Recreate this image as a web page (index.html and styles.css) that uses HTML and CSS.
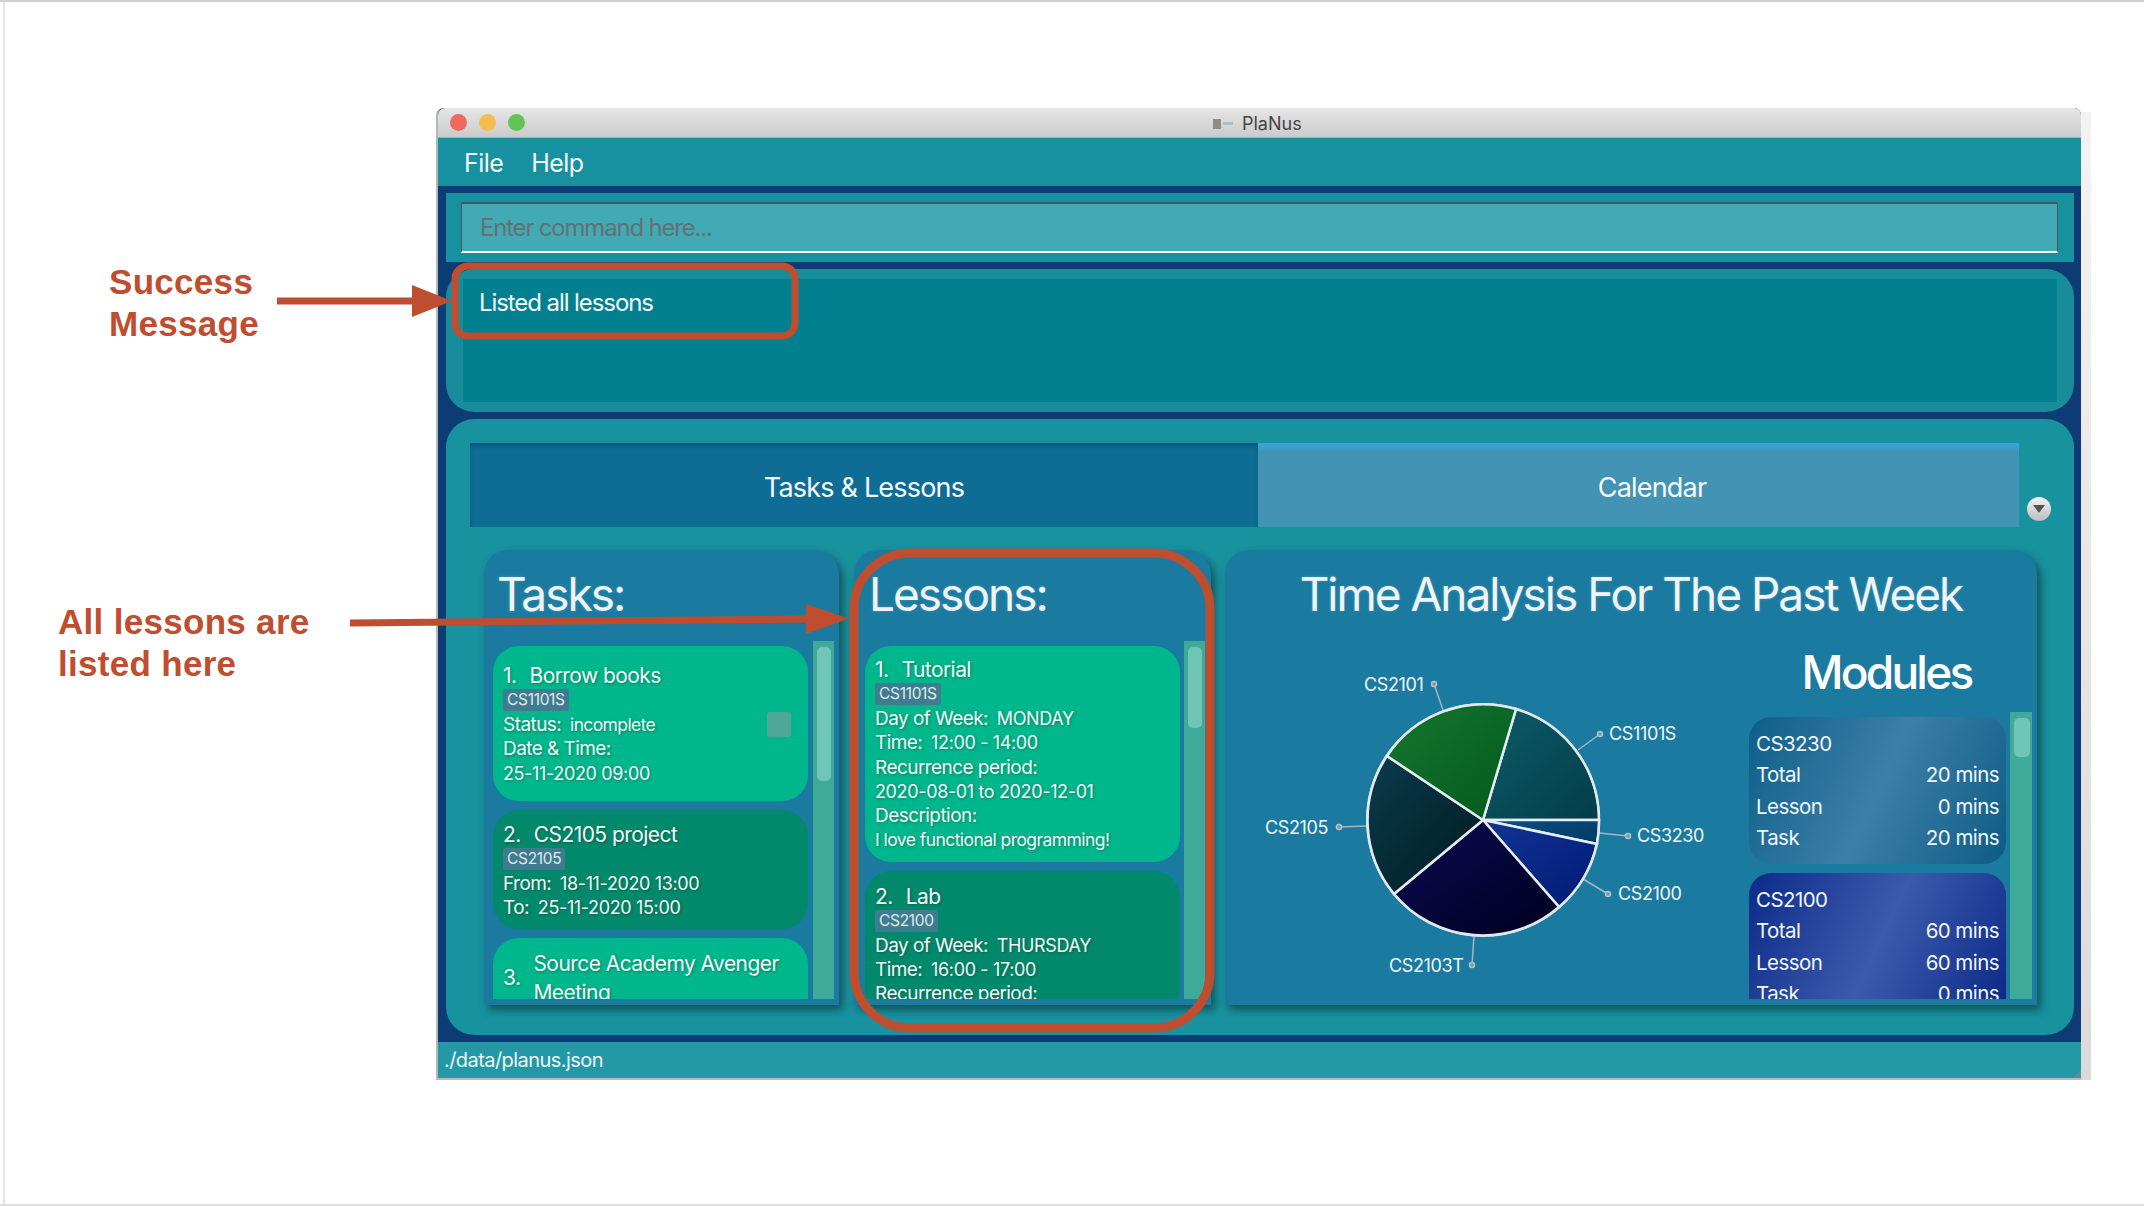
FILE: index.html
```html
<!DOCTYPE html>
<html>
<head>
    <title>PlaNus</title>
    <link rel="stylesheet" href="styles.css">
</head>
<body>
    <div class="slide">
        <div class="window">
            <div class="titlebar">
                <span class="light red"></span>
                <span class="light yellow"></span>
                <span class="light green"></span>
                <div class="wintitle"><span class="proxy"></span><span class="proxy-dash"></span>PlaNus</div>
            </div>
            <div class="menubar"><span>File</span><span>Help</span></div>

            <div class="content">
                <div class="command">
                    <div class="input">Enter command here...</div>
                </div>

                <div class="result">
                    <div class="result-inner">Listed all lessons</div>
                </div>

                <div class="main">
                    <div class="tabhead">
                        <div class="tabs">
                            <div class="tab active">Tasks &amp; Lessons</div>
                            <div class="tab">Calendar</div>
                        </div>
                        <div class="tabmenu"><span></span></div>
                    </div>

                    <div class="panels">
                        <!-- Tasks -->
                        <div class="panel tasks">
                            <h2>Tasks:</h2>
                            <div class="list">
                                <div class="cards">
                                    <div class="card light-card tall">
                                        <div class="card-body">
                                            <div class="card-title"><span>1.</span><span>Borrow books</span></div>
                                            <span class="badge">CS1101S</span>
                                            <p>Status: <small class="word">incomplete</small></p>
                                            <p>Date &amp; Time:</p>
                                            <p class="val">25-11-2020 09:00</p>
                                        </div>
                                        <span class="check"></span>
                                    </div>
                                    <div class="card dark-card">
                                        <div class="card-body">
                                            <div class="card-title"><span>2.</span><span>CS2105 project</span></div>
                                            <span class="badge">CS2105</span>
                                            <p>From: <small>18-11-2020 13:00</small></p>
                                            <p>To: <small>25-11-2020 15:00</small></p>
                                        </div>
                                    </div>
                                    <div class="card light-card">
                                        <div class="card-body">
                                            <div class="card-title wrap"><span>3.</span><span>Source Academy Avenger Meeting</span></div>
                                            <span class="badge">CS2101</span>
                                        </div>
                                    </div>
                                </div>
                                <div class="track"><div class="thumb thumb-tasks"></div></div>
                            </div>
                        </div>

                        <!-- Lessons -->
                        <div class="panel lessons">
                            <h2>Lessons:</h2>
                            <div class="list">
                                <div class="cards">
                                    <div class="card light-card">
                                        <div class="card-body">
                                            <div class="card-title"><span>1.</span><span>Tutorial</span></div>
                                            <span class="badge">CS1101S</span>
                                            <p>Day of Week: <small>MONDAY</small></p>
                                            <p>Time: <small>12:00 - 14:00</small></p>
                                            <p>Recurrence period:</p>
                                            <p class="val">2020-08-01 to 2020-12-01</p>
                                            <p>Description:</p>
                                            <p class="desc">I love functional programming!</p>
                                        </div>
                                    </div>
                                    <div class="card dark-card">
                                        <div class="card-body">
                                            <div class="card-title"><span>2.</span><span>Lab</span></div>
                                            <span class="badge">CS2100</span>
                                            <p>Day of Week: <small>THURSDAY</small></p>
                                            <p>Time: <small>16:00 - 17:00</small></p>
                                            <p>Recurrence period:</p>
                                        </div>
                                    </div>
                                </div>
                                <div class="track"><div class="thumb thumb-lessons"></div></div>
                            </div>
                        </div>

                        <!-- Time analysis -->
                        <div class="panel analysis">
                            <h2>Time Analysis For The Past Week</h2>
                            <div class="analysis-body">
                                <svg class="pie" width="519" height="358" viewBox="1225 641 519 358">
                                    <defs>
                                        <linearGradient id="g1" x1="0" y1="0" x2="1" y2="1"><stop offset="0" stop-color="#0d5c68"/><stop offset="1" stop-color="#033c49"/></linearGradient>
                                        <linearGradient id="g2" x1="0" y1="0" x2="1" y2="1"><stop offset="0" stop-color="#0a5083"/><stop offset="1" stop-color="#003864"/></linearGradient>
                                        <linearGradient id="g3" x1="0" y1="0" x2="1" y2="1"><stop offset="0" stop-color="#133394"/><stop offset="1" stop-color="#001b76"/></linearGradient>
                                        <linearGradient id="g4" x1="0" y1="0" x2="1" y2="1"><stop offset="0" stop-color="#0b0a55"/><stop offset="1" stop-color="#00001e"/></linearGradient>
                                        <linearGradient id="g5" x1="0" y1="0" x2="1" y2="1"><stop offset="0" stop-color="#0b3b4c"/><stop offset="1" stop-color="#001a20"/></linearGradient>
                                        <linearGradient id="g6" x1="0" y1="0" x2="1" y2="1"><stop offset="0" stop-color="#17752f"/><stop offset="1" stop-color="#005a1e"/></linearGradient>
                                    </defs>
                                    <g class="leaders">
                                        <path d="M1443 710L1434 684"/><circle cx="1434" cy="684" r="2.5"/>
                                        <path d="M1578 750L1600 734"/><circle cx="1600" cy="734" r="2.5"/>
                                        <path d="M1599 833L1628 836"/><circle cx="1628" cy="836" r="2.5"/>
                                        <path d="M1583 879L1608 894"/><circle cx="1608" cy="894" r="2.5"/>
                                        <path d="M1474 936L1472 965"/><circle cx="1472" cy="965" r="2.5"/>
                                        <path d="M1367 826L1339 827"/><circle cx="1339" cy="827" r="2.5"/>
                                    </g>
                                    <g class="slices">
                                        <path fill="url(#g1)" d="M1483 820L1516 709A116 116 0 0 1 1599 820Z"/>
                                        <path fill="url(#g2)" d="M1483 820L1599 820A116 116 0 0 1 1597 844Z"/>
                                        <path fill="url(#g3)" d="M1483 820L1597 844A116 116 0 0 1 1559 907Z"/>
                                        <path fill="url(#g4)" d="M1483 820L1559 907A116 116 0 0 1 1394 894Z"/>
                                        <path fill="url(#g5)" d="M1483 820L1394 894A116 116 0 0 1 1387 756Z"/>
                                        <path fill="url(#g6)" d="M1483 820L1387 756A116 116 0 0 1 1516 709Z"/>
                                    </g>
                                    <circle class="rim" cx="1483" cy="820" r="116"/>
                                    <g class="pie-labels">
                                        <text x="1364" y="691">CS2101</text>
                                        <text x="1609" y="740">CS1101S</text>
                                        <text x="1637" y="842">CS3230</text>
                                        <text x="1618" y="900">CS2100</text>
                                        <text x="1389" y="972">CS2103T</text>
                                        <text x="1265" y="834">CS2105</text>
                                    </g>
                                </svg>
                                <div class="modules">
                                    <h3>Modules</h3>
                                    <div class="list">
                                        <div class="cards">
                                            <div class="mod mod-a">
                                                <p>CS3230</p>
                                                <p><span>Total</span><span>20 mins</span></p>
                                                <p><span>Lesson</span><span>0 mins</span></p>
                                                <p><span>Task</span><span>20 mins</span></p>
                                            </div>
                                            <div class="mod mod-b">
                                                <p>CS2100</p>
                                                <p><span>Total</span><span>60 mins</span></p>
                                                <p><span>Lesson</span><span>60 mins</span></p>
                                                <p><span>Task</span><span>0 mins</span></p>
                                            </div>
                                        </div>
                                        <div class="track"><div class="thumb thumb-modules"></div></div>
                                    </div>
                                </div>
                            </div>
                        </div>
                    </div>
                </div>
            </div>

            <div class="statusbar">./data/planus.json</div>
        </div>

        <!-- Annotations on top of the screenshot -->
        <div class="note note-success">Success<br>Message</div>
        <div class="note note-lessons">All lessons are<br>listed here</div>
        <svg class="marks" width="2144" height="1206" viewBox="0 0 2144 1206">
            <rect x="455" y="266" width="340" height="70" rx="13"/>
            <rect class="big" x="854" y="553" width="356" height="475" rx="56"/>
            <path d="M277 301H415"/>
            <polygon points="412,285 452,301 412,317"/>
            <path d="M350 623L808 619"/>
            <polygon points="806,604 849,618.5 806,634"/>
        </svg>
    </div>
</body>
</html>
```

FILE: styles.css
```css
* {
    box-sizing: border-box;
}
html, body {
    margin: 0;
    padding: 0;
    background: white;
}
body {
    font-family: Inter, "Liberation Sans", sans-serif;
    letter-spacing: -0.035em;
}
.slide {
    position: relative;
    width: 2144px;
    height: 1206px;
    overflow: hidden;
    padding: 106px 0 0 436px;
    border-top: 2px solid #d0d0d0;
    border-bottom: 2px solid #dcdcdc;
}
.slide::before {
    content: "";
    position: absolute;
    left: 3px;
    top: 0;
    bottom: 0;
    width: 2px;
    background: #e4e6e8;
}

/* window */
.window {
    position: relative;
    display: flex;
    flex-direction: column;
    width: 1645px;
    height: 972px;
    background: #0d3b73;
    border-left: 2px solid #b4b8bc;
    border-radius: 7px 7px 0 0;
}
.window::after {
    content: "";
    position: absolute;
    left: 100%;
    top: 4px;
    bottom: 0;
    width: 10px;
    background: linear-gradient(#f3f3f3, #dadada);
}
.titlebar {
    position: relative;
    display: flex;
    align-items: center;
    flex: none;
    height: 30px;
    padding-left: 12px;
    gap: 12px;
    background: linear-gradient(#e6e6e6, #cbcbcb);
    border-bottom: 1px solid #aaa;
    border-radius: 7px 7px 0 0;
}
.light {
    width: 17px;
    height: 17px;
    border-radius: 50%;
}
.red { background: #ee6a5f; }
.yellow { background: #f5bd4f; }
.green { background: #61c454; }
.wintitle {
    position: absolute;
    left: 775px;
    top: 5px;
    display: flex;
    align-items: center;
    font-size: 18px;
    color: #444;
    letter-spacing: 0;
}
.proxy {
    width: 8px;
    height: 10px;
    background: #8d8d85;
}
.proxy-dash {
    width: 10px;
    height: 3px;
    margin: 0 9px 0 2px;
    background: #aebccb;
}
.menubar {
    display: flex;
    flex: none;
    gap: 28px;
    height: 48px;
    padding-left: 26px;
    font-size: 25px;
    line-height: 50px;
    color: #f2f8f9;
    background: #17909f;
}
.content {
    flex: 1;
    display: flex;
    flex-direction: column;
    gap: 7px;
    padding: 7px 7px 7px 8px;
}
.command {
    height: 69px;
    padding: 9px 16px 9px 15px;
    background: #17909f;
}
.input {
    height: 51px;
    padding-left: 18px;
    font-size: 24px;
    line-height: 48px;
    letter-spacing: -0.05em;
    color: #647173;
    background: #41aab5;
    border: solid #4a5558;
    border-width: 2px 1px 0 1px;
    border-bottom: 2px solid white;
}
.result {
    height: 143px;
    padding: 10px 17px;
    background: #188c9a;
    border-radius: 28px;
}
.result-inner {
    height: 123px;
    padding: 5px 16px;
    font-size: 24px;
    line-height: 38px;
    letter-spacing: -0.045em;
    color: #f4fafb;
    background: #03808f;
}
.main {
    flex: 1;
    padding: 24px 0 0;
    background: #18929f;
    border-radius: 28px;
}

/* tabs */
.tabhead {
    display: flex;
    gap: 8px;
    margin-left: 24px;
}
.tabs {
    display: flex;
    width: 1549px;
    height: 84px;
    overflow: hidden;
}
.tab {
    flex: 0 0 788px;
    font-size: 27px;
    line-height: 90px;
    letter-spacing: -0.03em;
    text-align: center;
    color: #f6fafc;
    background: linear-gradient(#33a9dd, #4393b5 9px);
}
.tab.active {
    background: #0f6d95;
    box-shadow: inset 0 3px 4px rgba(0,0,0,0.2);
}
.tabmenu {
    align-self: flex-end;
    display: flex;
    align-items: center;
    justify-content: center;
    width: 24px;
    height: 24px;
    margin-bottom: 6px;
    border-radius: 50%;
    background: linear-gradient(#f4f4f4, #bcbcbc);
}
.tabmenu span {
    border: 6px solid transparent;
    border-top: 8px solid #555;
    border-bottom: 0;
}

/* panels */
.panels {
    display: flex;
    gap: 15px;
    margin: 23px 0 0 38px;
}
.panel {
    display: flex;
    flex-direction: column;
    height: 455px;
    padding-bottom: 6px;
    background: #1b7aa0;
    border-radius: 24px 24px 0 0;
    box-shadow: 4px 5px 8px rgba(0,0,0,0.42);
}
.panel h2 {
    flex: 0 0 91px;
    margin: 0;
    font-size: 46px;
    font-weight: 400;
    line-height: 89px;
    letter-spacing: -0.0435em;
    color: #eef4f8;
    text-shadow: 0 0 3px rgba(255,255,255,0.2);
}
.tasks {
    width: 355px;
    padding-left: 9px;
    padding-right: 5px;
}
.tasks h2 { padding-left: 4px; }
.lessons {
    width: 357px;
    padding-left: 11px;
    padding-right: 6px;
}
.lessons h2 { padding-left: 4px; }
.analysis {
    width: 812px;
    margin-left: -1px;
    padding-right: 5px;
}
.analysis h2 {
    padding-left: 5px;
    text-align: center;
}
.list {
    flex: 1;
    display: flex;
    gap: 5px;
    min-height: 0;
    overflow: hidden;
}
.lessons .list { gap: 4px; }
.cards {
    display: flex;
    flex-direction: column;
    gap: 9px;
    flex: 1;
    padding-top: 5px;
    overflow: hidden;
}
.track {
    flex: 0 0 21px;
    padding: 6px 3px 0 4px;
    background: #3fa99a;
}
.thumb {
    background: #6fc6b7;
    border-radius: 5px;
}
.thumb-tasks { height: 134px; }
.thumb-lessons { height: 81px; }
.thumb-modules { height: 39px; }

/* task and lesson cards */
.card {
    flex: none;
    display: flex;
    align-items: center;
    justify-content: space-between;
    padding: 11px 17px 8px 10px;
    color: #f4faf8;
    border-radius: 26px;
    text-shadow: 1px 1px 3px rgba(0,0,0,0.3);
}
.light-card { background: #00b68c; }
.dark-card { background: #02896b; }
.tall {
    min-height: 155px;
    padding-top: 10px;
    padding-bottom: 9px;
}
.lessons .light-card {
    padding-top: 10px;
    padding-bottom: 9px;
}
.lessons .dark-card {
    padding-top: 12px;
}
.card-title {
    display: flex;
    align-items: center;
    gap: 13px;
    font-size: 21px;
    line-height: 27px;
}
.card-title.wrap {
    line-height: 29px;
}
.badge {
    display: block;
    width: max-content;
    height: 22px;
    margin-bottom: 2px;
    padding: 0 4px;
    font-size: 15.5px;
    line-height: 22px;
    letter-spacing: -0.02em;
    text-shadow: none;
    color: #dfeaec;
    background: #3f7c90;
    border-radius: 2px;
}
.card p {
    margin: 0;
    font-size: 19px;
    line-height: 24.3px;
}
.card small {
    margin-left: 4px;
    font-size: 18px;
    letter-spacing: -0.02em;
}
.card small.word {
    font-size: 17.5px;
    letter-spacing: -0.035em;
}
.card p.val {
    font-size: 18px;
    letter-spacing: -0.02em;
}
.card p.desc {
    font-size: 17.5px;
}
.check {
    width: 24px;
    height: 25px;
    background: #4fa897;
    border-radius: 3px;
}

/* time analysis */
.analysis-body {
    flex: 1;
    display: flex;
    min-height: 0;
}
.pie {
    flex: none;
    display: block;
    margin-right: 5px;
    overflow: visible;
}
.leaders path {
    stroke: #a5b6bd;
    stroke-width: 1.5;
    fill: none;
}
.leaders circle {
    fill: #6f97a8;
    stroke: #b5c3c8;
    stroke-width: 1.5;
}
.slices path {
    stroke: #e6eef0;
    stroke-width: 2.5;
}
.rim {
    fill: none;
    stroke: #dfe8ec;
    stroke-width: 2;
}
.pie-labels text {
    font-size: 18px;
    fill: #f1f6f8;
    letter-spacing: -0.02em;
}
.modules {
    flex: 1;
    display: flex;
    flex-direction: column;
    min-width: 0;
}
.modules h3 {
    flex: 0 0 71px;
    min-height: 0;
    margin: 0;
    padding-right: 8px;
    font-size: 46px;
    font-weight: 500;
    line-height: 62px;
    letter-spacing: -0.06em;
    text-align: center;
    color: white;
}
.modules .list { gap: 4px; }
.modules .track { flex-basis: 22px; padding-left: 4px; padding-right: 2px; }
.mod {
    flex: none;
    height: 147px;
    padding: 11px 7px 0 7px;
    color: #f1f6fb;
    border-radius: 22px;
}
.mod-a { background: linear-gradient(115deg, #0d5f88, #3d7fa8 50%, #0c5c84); }
.mod-b { background: linear-gradient(115deg, #0c2b88, #3c5aac 50%, #0b2786); }
.mod p {
    display: flex;
    justify-content: space-between;
    margin: 0;
    font-size: 20.5px;
    line-height: 31.3px;
}

.statusbar {
    position: relative;
    flex: none;
    height: 38px;
    padding-left: 6px;
    font-size: 20px;
    line-height: 36px;
    color: #eef6f7;
    background: #2398a6;
    border-bottom: 2px solid #b9b9b9;
}
.statusbar::after {
    content: "";
    position: absolute;
    right: 0;
    bottom: 0;
    border: solid transparent;
    border-width: 0 0 8px 8px;
    border-bottom-color: #5c8f94;
}

/* annotations */
.note {
    position: absolute;
    font-family: "Liberation Sans", Arial, sans-serif;
    font-size: 35px;
    font-weight: bold;
    line-height: 42px;
    letter-spacing: 0.3px;
    color: #bf4d30;
}
.note-success {
    left: 109px;
    top: 259px;
}
.note-lessons {
    left: 58px;
    top: 599px;
}
.marks {
    position: absolute;
    left: 0;
    top: -2px;
}
.marks rect {
    fill: none;
    stroke: #bf4d30;
    stroke-width: 7;
}
.marks rect.big {
    stroke-width: 9;
}
.marks path {
    fill: none;
    stroke: #bf4d30;
    stroke-width: 7;
}
.marks polygon {
    fill: #bf4d30;
}
```
